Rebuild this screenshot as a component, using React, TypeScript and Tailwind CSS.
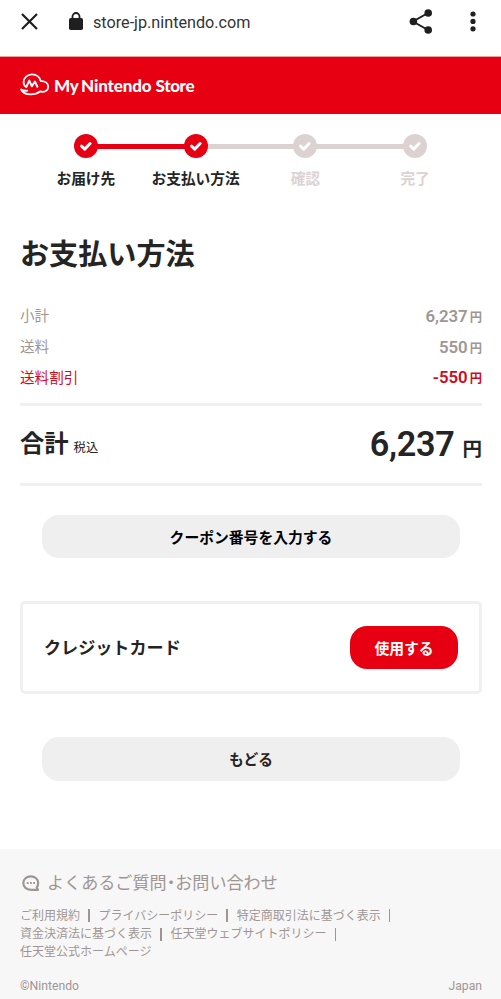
import clsx from 'clsx'

type Step = { label: string; done: boolean; line: boolean }

const STEPS: Step[] = [
  { label: 'お届け先', done: true, line: true },
  { label: 'お支払い方法', done: true, line: false },
  { label: '確認', done: false, line: false },
  { label: '完了', done: false, line: false },
]

const ROWS = [
  { label: '小計', price: '6,237', discount: false },
  { label: '送料', price: '550', discount: false },
  { label: '送料割引', price: '-550', discount: true },
]

const LINKS = [
  ['ご利用規約', 'プライバシーポリシー', '特定商取引法に基づく表示'],
  ['資金決済法に基づく表示', '任天堂ウェブサイトポリシー'],
]

function BrowserBar() {
  return (
    <div className="flex h-14 items-start pt-[9px] text-[#1f1f1f]">
      <svg className="mt-[4px] ml-[21px] h-[17px] w-[17px]" viewBox="0 0 17 17" fill="none" stroke="currentColor" strokeWidth="2.2">
        <path d="M1 1 16 16M16 1 1 16" />
      </svg>
      <svg className="mt-[3px] ml-[31px] h-[18px] w-[14px]" viewBox="0 0 14 18">
        <path d="M3.5 7V4.5a3.5 3.5 0 0 1 7 0V7" fill="none" stroke="currentColor" strokeWidth="1.8" />
        <rect y="6" width="14" height="12" rx="1.8" fill="currentColor" />
      </svg>
      <span className="ml-[10px] text-[16.2px] leading-[28px] text-[#333]">store-jp.nintendo.com</span>
      <svg className="mr-[2px] ml-auto h-[26px] w-[24px]" viewBox="0 0 24 26" fill="currentColor">
        <path d="M19 4 4 12.5 19 21" fill="none" stroke="currentColor" strokeWidth="2" />
        <circle cx="19.2" cy="4" r="3.8" />
        <circle cx="4.4" cy="12.5" r="3.8" />
        <circle cx="19.2" cy="21" r="3.8" />
      </svg>
      <svg className="mt-[2px] mr-[25px] ml-[35px] h-[21px] w-[6px]" viewBox="0 0 6 21" fill="currentColor">
        <circle cx="3" cy="3" r="2.6" />
        <circle cx="3" cy="10.4" r="2.6" />
        <circle cx="3" cy="17.8" r="2.6" />
      </svg>
    </div>
  )
}

function StoreHeader() {
  return (
    <header className="flex h-[58px] items-center border-t border-[#f0a0a5] bg-[#e60012] pl-5 text-white">
      <svg className="-mt-[2px] h-[23px] w-[30px] shrink-0" viewBox="0 0 30 23" fill="none" stroke="currentColor" strokeWidth="1.8" strokeLinecap="round" strokeLinejoin="round">
        <path d="M6.2 13.9C4.5 13 3.6 11.2 3.6 9.2c0-4.5 3.8-7.9 8.4-7.9 4.4 0 7.9 2.7 8.7 6.8 4.2-.5 7.5 2 7.5 5.6 0 3.9-3.9 6.2-7.7 4.6-3 2.3-6.5 3.2-10.2 3.1-4.3-.1-7.7-1.8-9.2-4.9 1.9 1.2 4 1.5 6.2 1.1" />
        <path d="M6.4 13.7 9.3 7.6l2.6 5.7 3-4.8 2.5 5.2" strokeWidth="2" />
      </svg>
      <div className="ml-[4px] flex items-baseline font-[Lato] text-[17px] leading-6 font-black">
        <span className="w-[27px] tracking-[-0.2px]">My</span>
        <span className="w-[74.5px] tracking-[-0.15px]">Nintendo</span>
        <span className="tracking-[-0.35px]">Store</span>
      </div>
    </header>
  )
}

function StepBar() {
  return (
    <ol className="mx-auto mt-5 grid w-[439px] grid-cols-4">
      {STEPS.map((step, i) => (
        <li key={step.label} className="flex flex-col items-center">
          <div className="flex w-full items-center">
            <span
              className={clsx('h-[5px] flex-1', i === 0 ? 'bg-transparent' : step.done ? 'bg-[#e60012]' : 'bg-[#dcd2d2]')}
            />
            <svg className={clsx('relative -mx-px h-6 w-6', step.done ? 'text-[#e60012]' : 'text-[#dcd2d2]')} viewBox="0 0 24 24">
              <circle cx="12" cy="12" r="12" fill="currentColor" />
              <path d="m7.6 12.1 3.1 3 5.4-5.6" fill="none" stroke="#fff" strokeWidth="3" strokeLinecap="round" strokeLinejoin="round" />
            </svg>
            <span
              className={clsx(
                'h-[5px] flex-1',
                i === STEPS.length - 1 ? 'bg-transparent' : step.line ? 'bg-[#e60012]' : 'bg-[#dcd2d2]',
              )}
            />
          </div>
          <span
            className={clsx(
              'mt-[10px] text-[14.7px] leading-[22px] font-bold whitespace-nowrap',
              step.done ? 'text-[#242424]' : 'text-[#dcd2d2]',
            )}
          >
            {step.label}
          </span>
        </li>
      ))}
    </ol>
  )
}

function Summary() {
  return (
    <section className="mt-[24px]">
      {ROWS.map((row) => (
        <div
          key={row.label}
          className={clsx('flex h-[30.6px] items-center justify-between', row.discount ? 'text-[#cf0a20]' : 'text-[#9f9694]')}
        >
          <span className="pt-[2px] text-[14.6px]">{row.label}</span>
          <span className="flex items-baseline pt-px text-[16.8px] font-semibold">
            {row.price}
            <span className="ml-[2px] text-[12.3px] font-bold">円</span>
          </span>
        </div>
      ))}
      <div className="mt-[10px] flex h-[83px] items-center justify-between border-y-[3px] border-[#f0f0f0] text-[#242424]">
        <p className="flex items-baseline">
          <span className="text-[24.3px] font-bold">合計</span>
          <span className="ml-[5px] text-[12.3px]">税込</span>
        </p>
        <p className="flex items-baseline">
          <span className="text-[34.2px] font-semibold tracking-[-0.3px]">6,237</span>
          <span className="ml-[8px] text-[19.5px] font-bold">円</span>
        </p>
      </div>
    </section>
  )
}

function Footer() {
  return (
    <footer className="mt-[68px] h-[150px] bg-[#f7f7f7] px-5 pt-[23px] text-[#9f9694]">
      <div className="flex h-6 items-center">
        <svg className="ml-[2px] h-[17px] w-[18px]" viewBox="0 0 18 17" fill="none" stroke="currentColor" strokeWidth="2.2">
          <path d="M16 14.8H9C4.4 14.8 1.3 12 1.3 8.1S4.6 1.3 8.8 1.3s7.4 2.9 7.4 6.7c0 1.8-.5 3.2-1.5 4.5z" strokeLinejoin="round" />
          <path d="M4.8 8h1.8M8 8h1.8M11.2 8H13" />
        </svg>
        <span className="ml-[7px] text-[17.1px]">
          よくあるご質問<span className="[font-feature-settings:'halt']">・</span>お問い合わせ
        </span>
      </div>
      <nav className="mt-[11px] text-[12px] leading-[18.3px]">
        {LINKS.map((line) => (
          <ul key={line[0]} className="flex">
            {line.map((link) => (
              <li key={link} className="flex items-center whitespace-nowrap">
                {link}
                <span className="mr-[9px] ml-[8px] h-[13px] w-[1.5px] bg-[#9f9694]" />
              </li>
            ))}
          </ul>
        ))}
        <p>任天堂公式ホームページ</p>
      </nav>
      <div className="mt-[15px] -mr-px flex justify-between text-[12.2px] leading-[18px]">
        <small className="text-[12.2px]">©Nintendo</small>
        <span>Japan</span>
      </div>
    </footer>
  )
}

export default function App() {
  return (
    <div className="h-[999px] w-[501px] overflow-hidden bg-white font-[Roboto,'Noto_Sans_CJK_JP',sans-serif]">
      <BrowserBar />
      <StoreHeader />
      <StepBar />
      <main className="pr-[19px] pl-5">
        <h1 className="mt-[43px] text-[29.1px] leading-[44px] font-bold text-[#242424]">お支払い方法</h1>
        <Summary />
        <button type="button" className="mx-auto mt-[29px] block h-[43px] w-[418px] rounded-[17px] bg-[#efefef] pt-[3px] text-[14.8px] font-bold text-black">
          クーポン番号を入力する
        </button>
        <div className="mt-[43px] flex h-[93px] items-center justify-between rounded-[5px] border-[3px] border-[#f0f0f0] pr-[21px] pl-[21px]">
          <span className="pt-[3px] text-[17.1px] font-bold text-[#242424]">クレジットカード</span>
          <button type="button" className="h-[43px] w-[108px] rounded-[17px] bg-[#e60012] pt-[4px] text-[14.8px] font-bold text-white">
            使用する
          </button>
        </div>
        <button type="button" className="mx-auto mt-[43px] block h-[44px] w-[418px] rounded-[17px] bg-[#efefef] pt-[2px] text-[14.7px] font-bold text-[#242424]">
          もどる
        </button>
      </main>
      <Footer />
    </div>
  )
}
